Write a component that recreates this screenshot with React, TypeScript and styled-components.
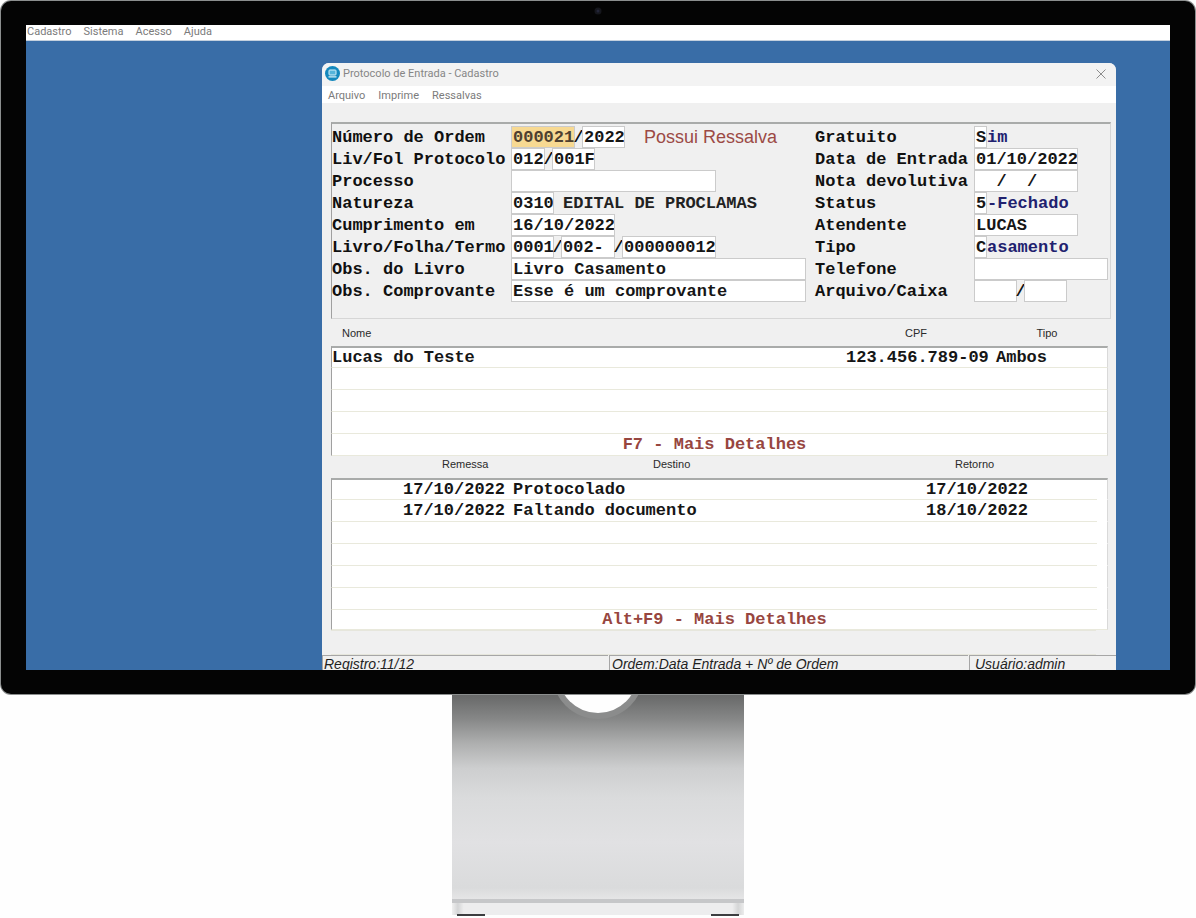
import React from "react";
import styled, { createGlobalStyle } from "styled-components";

const mono = `"Liberation Mono", "Courier New", monospace`;
const sans = `"Liberation Sans", Arial, sans-serif`;
const ui = `Roboto, "Segoe UI", sans-serif`;

const Global = createGlobalStyle`
  *, *::before, *::after { box-sizing: border-box; }
  body { margin: 0; background: #fefefe; }
`;

const Page = styled.main`
  display: flex;
  flex-direction: column;
  align-items: center;
  padding: 1px 1px 0;
`;

const Bezel = styled.div`
  width: 100%;
  padding: 24px 25px;
  background: #040404;
  border-radius: 10px;
  box-shadow: 0 0 0 1px #8b8e8e;
  position: relative;
`;

const Camera = styled.svg`
  position: absolute;
  top: 5px;
  left: 50%;
  width: 10px;
  height: 10px;
  margin-left: -5px;
`;

const Screen = styled.div`
  background: #396da7;
  overflow: hidden;
`;

const MainMenu = styled.nav`
  display: flex;
  gap: 12px;
  height: 16px;
  padding-left: 1px;
  background: #fff;
  border-bottom: 1px solid #c4d0de;
`;

const MenuItem = styled.button`
  display: block;
  height: 13px;
  border: 0;
  padding: 0;
  background: none;
  color: #7b7b7b;
  font: 11px/13px ${ui};
`;

const Desktop = styled.div`
  display: flex;
  justify-content: flex-end;
  padding: 22px 54px 0;
`;

const Window = styled.section`
  width: 100%;
  max-width: 794px;
  background: #f0f0f0;
  border-radius: 7px 7px 0 0;
  overflow: hidden;
`;

const TitleBar = styled.header`
  display: flex;
  align-items: center;
  height: 23px;
  padding: 0 9px 2px 3px;
  background: #f3f3f3;
`;

const Title = styled.h1`
  flex: 1;
  margin: 0 0 0 3px;
  color: #868686;
  font: 11px/15px ${ui};
`;

const CloseButton = styled.button`
  display: flex;
  border: 0;
  padding: 0;
  background: none;
`;

const WindowMenu = styled.nav`
  display: flex;
  gap: 13px;
  height: 17px;
  padding: 3px 6px 0;
  background: #fff;
`;

const Body = styled.div`
  padding: 19px 5px 0 9px;
`;

const FormPanel = styled.form`
  display: grid;
  grid-template-columns: 179px 304px 159px 1fr;
  grid-auto-rows: 22px;
  padding: 2px 0 16px;
  border: 1px solid #d6d6d6;
  border-top: 2px solid #a9abaa;
  border-left-color: #a0a0a0;
`;

const Label = styled.label`
  color: #101010;
  font: bold 17px/23px ${mono};
  white-space: pre;
`;

const FieldGroup = styled.div`
  display: flex;
  align-items: flex-start;
`;

const Field = styled.input<{ $w: number; $active?: boolean }>`
  width: ${(p) => p.$w}px;
  height: 22px;
  padding: 1px 0 0 1px;
  border: 1px solid #cbcbcb;
  border-radius: 0;
  outline: 0;
  background: ${(p) => (p.$active ? "#f7d992" : "#fff")};
  color: ${(p) => (p.$active ? "#4e4030" : "#161616")};
  font: bold 17px/19px ${mono};
`;

const Slash = styled.span`
  display: flex;
  justify-content: center;
  width: 7px;
  color: #101010;
  font: bold 17px/23px ${mono};
`;

const FieldText = styled.span<{ $tone?: string; $indent?: number }>`
  padding-left: ${(p) => p.$indent ?? 0}px;
  color: ${(p) => p.$tone ?? "#222"};
  font: bold 17px/23px ${mono};
  white-space: pre;
`;

const Notice = styled.strong`
  padding-left: 19px;
  color: #9c4a45;
  font: 18px/22px ${sans};
`;

const Table = styled.table`
  width: 100%;
  table-layout: fixed;
  border-spacing: 0;
`;

const TableArea = styled.div`
  padding-right: 3px;
`;

const Head = styled.th<{ $h: number; $pad?: number; $w?: number; $center?: boolean }>`
  width: ${(p) => (p.$w ? `${p.$w}px` : "auto")};
  height: ${(p) => p.$h}px;
  padding: 0 0 ${(p) => (p.$h > 22 ? 0 : 6)}px ${(p) => p.$pad ?? 0}px;
  color: #2a2a2a;
  font: 11px/16px ${sans};
  text-align: ${(p) => (p.$center ? "center" : "left")};
`;

const Row = styled.tr`
  td { border-bottom: 1px solid #e9e9dc; }
  td:first-child { border-left: 1px solid #a0a0a0; }
  td:last-child { border-right: 1px solid #d9d9d9; }
`;

const BodyRows = styled.tbody`
  tr:first-child td { border-top: 2px solid #a9abaa; }
`;

const Cell = styled.td<{ $pad?: number; $blank?: boolean }>`
  height: 22px;
  padding: 0 0 0 ${(p) => p.$pad ?? 0}px;
  background: #fff;
  color: #161616;
  font: bold 17px/19px ${mono};
  white-space: nowrap;
  ${(p) => p.$blank && "&& { border-bottom-color: #fff; }"}
`;

const DetailCell = styled.td<{ $h: number }>`
  height: ${(p) => p.$h}px;
  padding: 0 10px 0 0;
  background: #fff;
  text-align: center;
`;

const DetailButton = styled.button`
  display: block;
  margin: 0 auto;
  border: 0;
  padding: 0;
  background: none;
  color: #97463f;
  font: bold 17px/19px ${mono};
`;

const Rule = styled.div`
  height: 25px;
  margin-right: 15px;
  border-top: 1px solid #e6e6dc;
  border-bottom: 1px solid #e6e6dc;
`;

const StatusBar = styled.footer`
  display: grid;
  grid-template-columns: 286px 1fr 147px;
  gap: 1px;
  height: 15px;
`;

const StatusCell = styled.span<{ $pad?: number }>`
  height: 15px;
  padding-left: ${(p) => p.$pad ?? 2}px;
  border-top: 1px solid #a6a6a6;
  border-left: 1px solid #a6a6a6;
  color: #1f1f1f;
  font: italic 14px/16px ${sans};
  white-space: nowrap;
`;

const Stand = styled.svg`
  display: block;
  width: 292px;
  height: 223px;
`;

const navy = "#21216f";

function AppIcon() {
  return (
    <svg width="15" height="15" viewBox="0 0 15 15" aria-hidden="true">
      <circle cx="7.5" cy="7.5" r="7.5" fill="#1488bd" />
      <rect x="4" y="4" width="7" height="5" rx="0.8" fill="#55b4da" stroke="#d8f1fa" />
      <path d="M3.5 10.8h8" stroke="#d8f1fa" strokeWidth="1.2" />
    </svg>
  );
}

const people = [["Lucas do Teste", "123.456.789-09", "Ambos"], [], [], []];
const moves = [
  ["17/10/2022", "Protocolado", "17/10/2022"],
  ["17/10/2022", "Faltando documento", "18/10/2022"],
  [], [], [], [],
];

export default function App() {
  return (
    <Page>
      <Global />
      <Bezel>
        <Camera viewBox="0 0 10 10" aria-hidden="true">
          <circle cx="5" cy="5" r="3.5" fill="#15161c" />
          <circle cx="5" cy="5" r="1.5" fill="#232538" />
        </Camera>
        <Screen>
          <MainMenu>
            {["Cadastro", "Sistema", "Acesso", "Ajuda"].map((m) => (
              <MenuItem key={m} type="button">{m}</MenuItem>
            ))}
          </MainMenu>
          <Desktop>
            <Window>
              <TitleBar>
                <AppIcon />
                <Title>Protocolo de Entrada - Cadastro</Title>
                <CloseButton type="button" aria-label="Fechar">
                  <svg width="12" height="12" viewBox="0 0 12 12">
                    <path d="M1.5 1.5l9 9M10.5 1.5l-9 9" stroke="#8c8c8c" fill="none" />
                  </svg>
                </CloseButton>
              </TitleBar>
              <WindowMenu>
                {["Arquivo", "Imprime", "Ressalvas"].map((m) => (
                  <MenuItem key={m} type="button">{m}</MenuItem>
                ))}
              </WindowMenu>
              <Body>
                <FormPanel>
                  <Label htmlFor="ordem">Número de Ordem</Label>
                  <FieldGroup>
                    <Field id="ordem" $w={64} $active defaultValue="000021" />
                    <Slash>/</Slash>
                    <Field $w={43} aria-label="Ano" defaultValue="2022" />
                    <Notice>Possui Ressalva</Notice>
                  </FieldGroup>
                  <Label htmlFor="gratuito">Gratuito</Label>
                  <FieldGroup>
                    <Field id="gratuito" $w={13} defaultValue="S" />
                    <FieldText $tone={navy}>im</FieldText>
                  </FieldGroup>

                  <Label htmlFor="liv">Liv/Fol Protocolo</Label>
                  <FieldGroup>
                    <Field id="liv" $w={34} defaultValue="012" />
                    <Slash>/</Slash>
                    <Field $w={43} aria-label="Folha do protocolo" defaultValue="001F" />
                  </FieldGroup>
                  <Label htmlFor="entrada">Data de Entrada</Label>
                  <FieldGroup><Field id="entrada" $w={104} defaultValue="01/10/2022" /></FieldGroup>

                  <Label htmlFor="processo">Processo</Label>
                  <FieldGroup><Field id="processo" $w={205} /></FieldGroup>
                  <Label htmlFor="nota">Nota devolutiva</Label>
                  <FieldGroup><Field id="nota" $w={104} defaultValue="  /  /" /></FieldGroup>

                  <Label htmlFor="natureza">Natureza</Label>
                  <FieldGroup>
                    <Field id="natureza" $w={43} defaultValue="0310" />
                    <FieldText $indent={9}>EDITAL DE PROCLAMAS</FieldText>
                  </FieldGroup>
                  <Label htmlFor="status">Status</Label>
                  <FieldGroup>
                    <Field id="status" $w={13} defaultValue="5" />
                    <FieldText $tone={navy}>-Fechado</FieldText>
                  </FieldGroup>

                  <Label htmlFor="cumprimento">Cumprimento em</Label>
                  <FieldGroup><Field id="cumprimento" $w={104} defaultValue="16/10/2022" /></FieldGroup>
                  <Label htmlFor="atendente">Atendente</Label>
                  <FieldGroup><Field id="atendente" $w={104} defaultValue="LUCAS" /></FieldGroup>

                  <Label htmlFor="livro">Livro/Folha/Termo</Label>
                  <FieldGroup>
                    <Field id="livro" $w={43} defaultValue="0001" />
                    <Slash>/</Slash>
                    <Field $w={54} aria-label="Folha" defaultValue="002-" />
                    <Slash>/</Slash>
                    <Field $w={94} aria-label="Termo" defaultValue="000000012" />
                  </FieldGroup>
                  <Label htmlFor="tipo">Tipo</Label>
                  <FieldGroup>
                    <Field id="tipo" $w={13} defaultValue="C" />
                    <FieldText $tone={navy}>asamento</FieldText>
                  </FieldGroup>

                  <Label htmlFor="obslivro">Obs. do Livro</Label>
                  <FieldGroup><Field id="obslivro" $w={295} defaultValue="Livro Casamento" /></FieldGroup>
                  <Label htmlFor="telefone">Telefone</Label>
                  <FieldGroup><Field id="telefone" $w={134} /></FieldGroup>

                  <Label htmlFor="obscomp">Obs. Comprovante</Label>
                  <FieldGroup>
                    <Field id="obscomp" $w={295} defaultValue="Esse é um comprovante" />
                  </FieldGroup>
                  <Label htmlFor="arquivo">Arquivo/Caixa</Label>
                  <FieldGroup>
                    <Field id="arquivo" $w={43} />
                    <Slash>/</Slash>
                    <Field $w={43} aria-label="Caixa" />
                  </FieldGroup>
                </FormPanel>

                <TableArea>
                  <Table>
                    <thead>
                      <tr>
                        <Head $h={27} $pad={11}>Nome</Head>
                        <Head $h={27} $w={140} $center>CPF</Head>
                        <Head $h={27} $w={122} $center>Tipo</Head>
                      </tr>
                    </thead>
                    <BodyRows>
                      {people.map(([name, cpf, kind], i) => (
                        <Row key={i}>
                          <Cell>{name}</Cell>
                          <Cell>{cpf}</Cell>
                          <Cell $pad={10}>{kind}</Cell>
                        </Row>
                      ))}
                      <Row>
                        <DetailCell $h={22} colSpan={3}>
                          <DetailButton type="button">F7 - Mais Detalhes</DetailButton>
                        </DetailCell>
                      </Row>
                    </BodyRows>
                  </Table>
                  <Table>
                    <thead>
                      <tr>
                        <Head $h={22} $w={182} $pad={111}>Remessa</Head>
                        <Head $h={22} $pad={140}>Destino</Head>
                        <Head $h={22} $w={171} $pad={29}>Retorno</Head>
                        <Head $h={22} $w={11} aria-hidden="true" />
                      </tr>
                    </thead>
                    <BodyRows>
                      {moves.map(([sent, target, back], i) => (
                        <Row key={i}>
                          <Cell $pad={71}>{sent}</Cell>
                          <Cell>{target}</Cell>
                          <Cell>{back}</Cell>
                          <Cell $blank />
                        </Row>
                      ))}
                      <Row>
                        <DetailCell $h={20} colSpan={4}>
                          <DetailButton type="button">Alt+F9 - Mais Detalhes</DetailButton>
                        </DetailCell>
                      </Row>
                    </BodyRows>
                  </Table>
                </TableArea>
                <Rule />
              </Body>
              <StatusBar>
                <StatusCell $pad={1}>Registro:11/12</StatusCell>
                <StatusCell>Ordem:Data Entrada + Nº de Ordem</StatusCell>
                <StatusCell $pad={5}>Usuário:admin</StatusCell>
              </StatusBar>
            </Window>
          </Desktop>
        </Screen>
      </Bezel>
      <Stand viewBox="0 0 292 223" aria-hidden="true">
        <defs>
          <linearGradient id="metal" x1="0" y1="0" x2="0" y2="1">
            <stop offset="0" stopColor="#666767" />
            <stop offset="0.12" stopColor="#868787" />
            <stop offset="0.24" stopColor="#aeafaf" />
            <stop offset="0.36" stopColor="#cdcecf" />
            <stop offset="0.5" stopColor="#dadbdc" />
            <stop offset="0.72" stopColor="#e1e1e3" />
            <stop offset="0.94" stopColor="#dadbdc" />
            <stop offset="1" stopColor="#e6e6e7" />
          </linearGradient>
          <linearGradient id="base" x1="0" y1="0" x2="1" y2="0">
            <stop offset="0" stopColor="#f0f0f0" />
            <stop offset="0.02" stopColor="#d4d5d6" />
            <stop offset="0.04" stopColor="#ededee" />
            <stop offset="0.96" stopColor="#ededee" />
            <stop offset="0.98" stopColor="#d4d5d6" />
            <stop offset="1" stopColor="#ececec" />
          </linearGradient>
        </defs>
        <rect width="292" height="206" fill="url(#metal)" />
        <circle cx="146" cy="-21" r="46" fill="#8b8c8c" />
        <circle cx="146" cy="-21" r="40" fill="#fefefe" />
        <rect y="205" width="292" height="4" fill="#c6c7c9" />
        <rect y="209" width="292" height="12" fill="url(#base)" />
        <rect x="5" y="220" width="28" height="2" fill="#3c3d40" />
        <rect x="259" y="220" width="28" height="2" fill="#3c3d40" />
      </Stand>
    </Page>
  );
}
